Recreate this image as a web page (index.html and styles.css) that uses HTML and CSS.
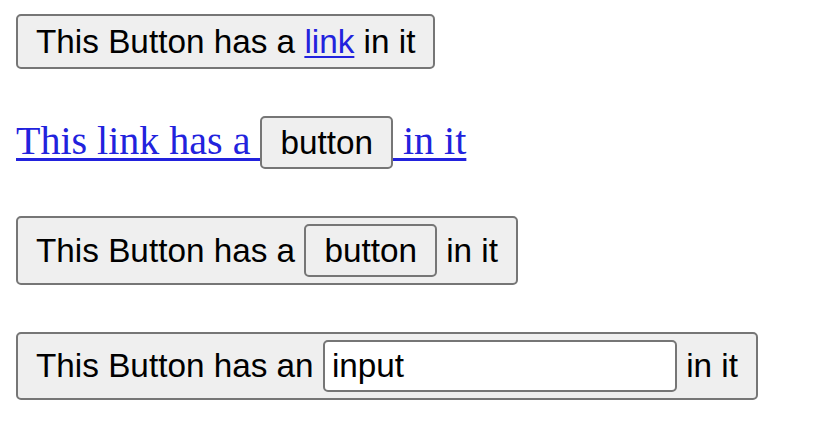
FILE: index.html
```html
<!DOCTYPE html>
<html lang="en">
<head>
    <meta charset="UTF-8">
    <meta name="viewport" content="width=device-width, initial-scale=1.0">
    <title>Nested controls</title>
    <link rel="stylesheet" href="styles.css">
</head>
<body>
    <div class="page">
        <!-- button with a link -->
        <div class="row">
            <button class="btn">This Button has a <a href="#">link</a> in it</button>
        </div>

        <!-- link with a button -->
        <div class="row row-link">
            <a class="big-link" href="#">This link has a <button class="btn btn-inner">button</button> in it</a>
        </div>

        <!-- button with a button -->
        <div class="row">
            <button class="btn">This Button has a <span class="btn btn-inner">button</span> in it</button>
        </div>

        <!-- button with an input -->
        <div class="row">
            <button class="btn">This Button has an <input class="field" type="text" value="input"> in it</button>
        </div>
    </div>
</body>
</html>
```

FILE: styles.css
```css
body {
    margin: 0;
    background: #fff;
    font-family: "Liberation Serif", "Times New Roman", serif;
}
.page {
    display: flex;
    flex-direction: column;
    align-items: flex-start;
    gap: 47px;
    padding: 14px 16px;
}
.row {
    display: block;
}
a {
    color: #2222dd;
    text-decoration: underline;
}
.btn {
    display: inline-block;
    font-family: "Liberation Sans", Arial, sans-serif;
    font-size: 33.3px;
    line-height: 39px;
    color: #000;
    background-color: #efefef;
    border: 2px solid #767676;
    border-radius: 5px;
    padding: 6px 18px;
    margin: 0;
    cursor: pointer;
}
.btn a {
    text-decoration-thickness: 2px;
    text-underline-offset: 3px;
}
.btn-inner {
    padding-top: 5px;
    padding-bottom: 5px;
}
.big-link {
    font-size: 40px;
    line-height: 46px;
    text-decoration-thickness: 3px;
    text-underline-offset: 4px;
}
.field {
    font-family: "Liberation Sans", Arial, sans-serif;
    font-size: 33.3px;
    line-height: 38px;
    width: 336px;
    padding: 5px 7px;
    margin: 0;
    border: 2px solid #767676;
    border-radius: 5px;
    background: #fff;
    color: #000;
}
```
